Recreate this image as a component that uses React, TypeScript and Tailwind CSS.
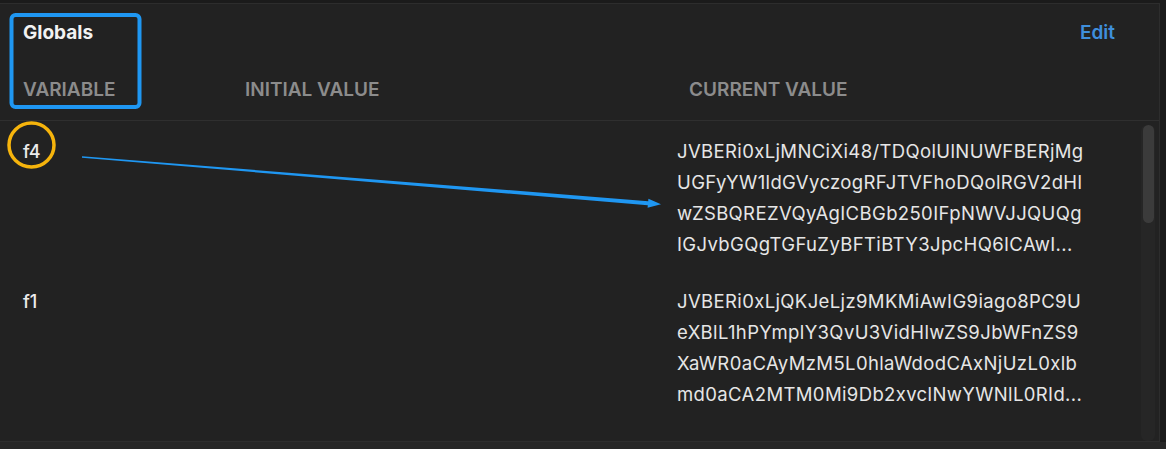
import React from "react";

const rows = [
  {
    name: "f4",
    lines: [
      "JVBERi0xLjMNCiXi48/TDQolUlNUWFBERjMg",
      "UGFyYW1ldGVyczogRFJTVFhoDQolRGV2dHl",
      "wZSBQREZVQyAgICBGb250IFpNWVJJQUQg",
      "IGJvbGQgTGFuZyBFTiBTY3JpcHQ6ICAwI...",
    ],
  },
  {
    name: "f1",
    lines: [
      "JVBERi0xLjQKJeLjz9MKMiAwIG9iago8PC9U",
      "eXBlL1hPYmplY3QvU3VidHlwZS9JbWFnZS9",
      "XaWR0aCAyMzM5L0hlaWdodCAxNjUzL0xlb",
      "md0aCA2MTM0Mi9Db2xvclNwYWNlL0RId...",
    ],
  },
];

export default function App() {
  return (
    <div className="relative w-[1166px] h-[449px] overflow-hidden bg-[#1b1b1b] font-['Inter','Noto_Sans',sans-serif]">
      <div className="flex flex-col h-full pt-[3px]">
        <div className="w-[1160px] h-[439px] shrink-0 bg-[#222222] border-t border-r border-b border-[#2d2d2d] flex flex-col">
          {/* header */}
          <div className="h-[117px] shrink-0 border-b border-[#2f2f2f] pt-[17px] pl-[23px] pr-[44px] flex flex-col">
            <div className="flex justify-between items-baseline h-[24px]">
              <span className="text-[19px] leading-[24px] font-bold text-[#f2f2f2]">Globals</span>
              <span className="text-[19px] leading-[24px] font-semibold text-[#3f8fdc]">Edit</span>
            </div>
            <div className="mt-[33px] flex text-[19px] leading-[24px] font-semibold text-[#8c8c8c]">
              <span className="w-[222px]">VARIABLE</span>
              <span className="w-[444px]">INITIAL VALUE</span>
              <span>CURRENT VALUE</span>
            </div>
          </div>
          {/* body */}
          <div className="flex-1 flex min-h-0">
            <div className="flex-1 flex flex-col">
              {rows.map((r) => (
                <div key={r.name} className="h-[150px] pt-[15px] flex">
                  <div className="w-[677px] pl-[23px] text-[18px] leading-[31px] font-medium text-[#ececec]">
                    {r.name}
                  </div>
                  <div className="flex flex-col text-[18.5px] leading-[31px] tracking-[0.37px] text-[#e6e6e6]">
                    {r.lines.map((l, i) => (
                      <div key={i} className="whitespace-nowrap">{l}</div>
                    ))}
                  </div>
                </div>
              ))}
            </div>
            <div className="w-[18px] shrink-0 pt-[4px] pr-[3px]">
              <div className="h-full w-[14px] bg-[#262626] rounded-[6px] flex justify-center">
                <div className="w-[11px] h-[98px] bg-[#3b3b3b] rounded-full" />
              </div>
            </div>
          </div>
        </div>
        <div className="flex-1 bg-[#262626]" />
      </div>

      {/* annotations overlay */}
      <svg
        className="absolute inset-0 pointer-events-none"
        width="1166"
        height="449"
        viewBox="0 0 1166 449"
      >
        <rect x="11.5" y="15" width="128" height="92" rx="4" fill="none" stroke="#1f97f2" strokeWidth="4" />
        <ellipse cx="31.5" cy="145" rx="22.5" ry="22" fill="none" stroke="#f6b40c" strokeWidth="3.5" />
        <path
          d="M82.06 156.3 L648.2 201.2 L648.4 198.8 L661 204.3 L647.6 207.8 L647.8 205.2 L81.94 157.7 Z"
          fill="#1f97f2"
        />
      </svg>
    </div>
  );
}
